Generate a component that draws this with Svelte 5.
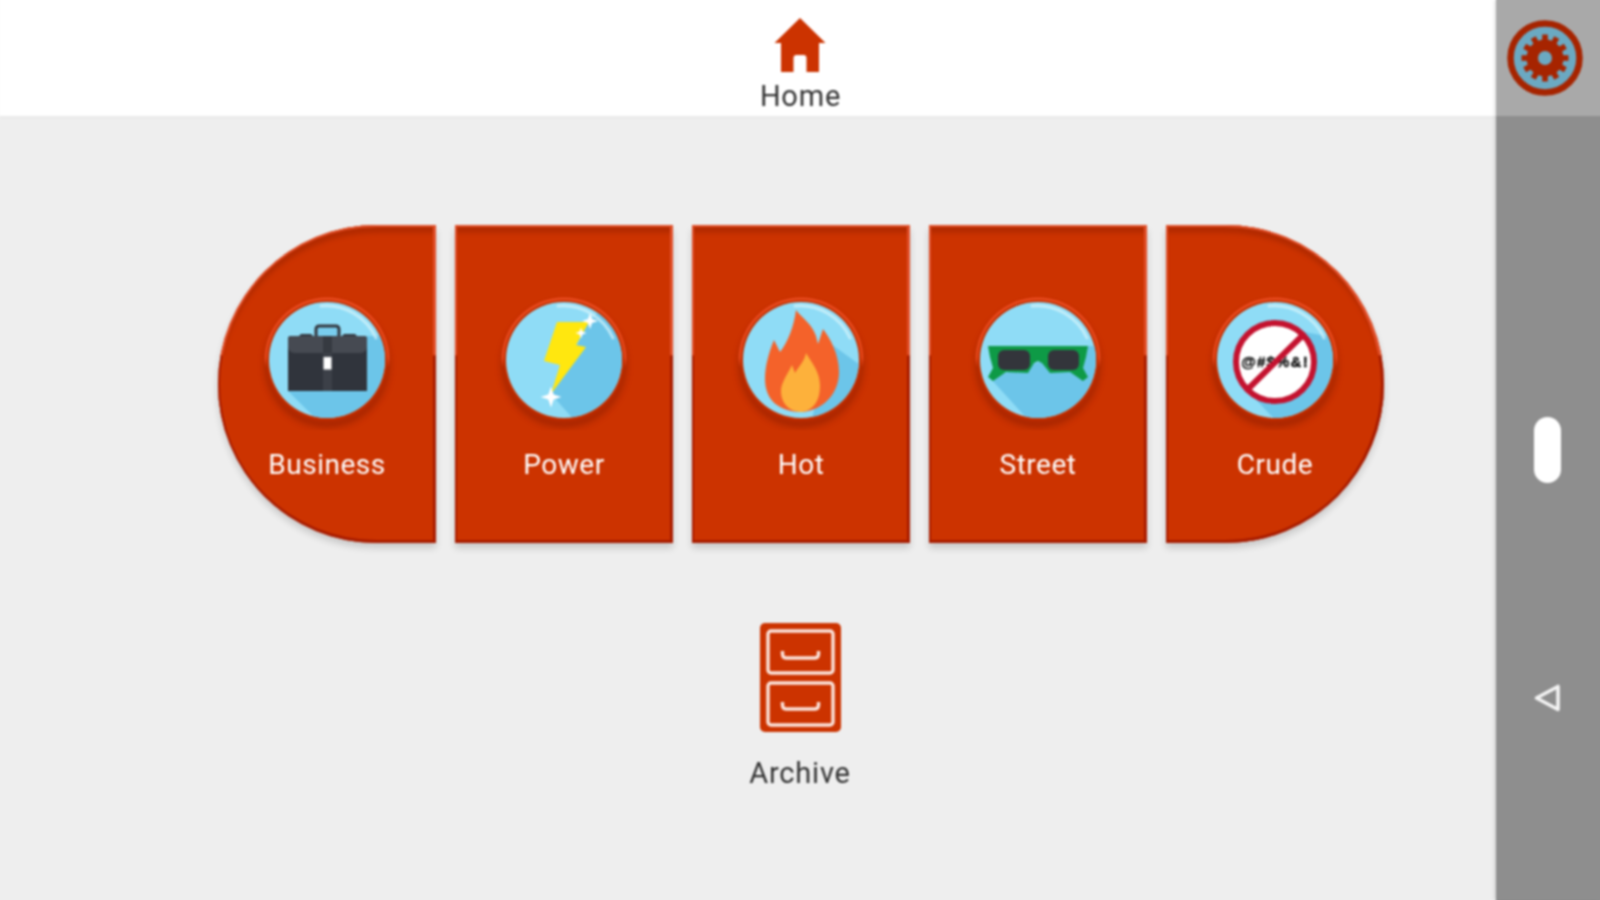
<script>
  const items = [
    { key: 'business', label: 'Business', shade: '-39,31 -8,62 70,62 70,-24 40,-24' },
    { key: 'power', label: 'Power', shade: '25,-38 55,-70 70,-70 70,62 12,62 -13,34' },
    { key: 'hot', label: 'Hot', shade: '30,-16 66,10 66,62 10,62' },
    { key: 'street', label: 'Street', shade: '-48,18 -8,62 70,62 70,-14 50,-14' },
    { key: 'crude', label: 'Crude', shade: '-28,30 2,62 70,62 70,-20 30,-28' }
  ];
  const star = 'M0 -8 L2 -2 L8 0 L2 2 L0 8 L-2 2 L-8 0 L-2 -2 Z';
</script>

<div class="page">
  <header class="topbar">
    <svg class="home-icon" viewBox="0 0 52 56" aria-hidden="true">
      <path d="M26 0 L51.500 25 L45 25 L45 54 L32.500 54 L32.500 40 Q32.500 37 29.500 37 L22.500 37 Q19.500 37 19.500 40 L19.500 54 L7 54 L7 25 L0.500 25 Z" />
    </svg>
    <span class="top-label">Home</span>
  </header>

  <main class="content">
    <section class="cards">
      {#each items as item}
        <button class="card {item.key}">
          <svg class="badge" viewBox="-70 -70 140 140" aria-hidden="true">
            <defs>
              <clipPath id="clip-{item.key}"><circle r="58" /></clipPath>
              <linearGradient id="ring-{item.key}" x1="0" y1="0" x2="0" y2="1">
                <stop offset="0" stop-color="#ea4c20" />
                <stop offset="0.48" stop-color="#e4471a" />
                <stop offset="0.56" stop-color="#b42a00" />
                <stop offset="1" stop-color="#b42800" />
              </linearGradient>
              <filter id="soft-{item.key}" x="-20%" y="-20%" width="140%" height="140%">
                <feGaussianBlur stdDeviation="3" />
              </filter>
            </defs>
            <circle cy="5" r="63" fill="#8f1f00" opacity="0.55" filter="url(#soft-{item.key})" />
            <circle r="62.500" fill="url(#ring-{item.key})" />
            <circle r="60" fill="#c43000" />
            <circle r="58" fill="#8fdcf6" />
            <g clip-path="url(#clip-{item.key})">
              <polygon points={item.shade} fill="#6cc5e9" />
            </g>
            <path d="M-6 -54 A55 55 0 0 1 49 -22" fill="none" stroke="#d6f3fb" stroke-opacity="0.7" stroke-width="3" stroke-linecap="round" />

            {#if item.key === 'business'}
              <rect x="-11" y="-34" width="23" height="12" rx="3" fill="#79cdee" stroke="#33373f" stroke-width="3" />
              <path d="M-39 -21 Q-39 -24 -36 -24 L-28 -24 L-26 -26 L-16 -26 L-14 -24 L15 -24 L17 -26 L28 -26 L30 -24 L37 -24 Q40 -24 40 -21 L40 31 L-39 31 Z" fill="#30343c" />
              <path d="M-39 -21 Q-39 -24 -36 -24 L37 -24 Q40 -24 40 -21 L40 -14 Q40 -7 33 -7 L-32 -7 Q-39 -7 -39 -14 Z" fill="#464a52" />
              <rect x="-4" y="-24" width="9" height="17" fill="#363a41" />
              <rect x="-4" y="-7" width="9" height="38" fill="#3c4048" />
              <rect x="-3.500" y="-3" width="8" height="12.500" fill="#ffffff" />
            {:else if item.key === 'power'}
              <polygon points="-7,-38 25,-38 12,-15 22,-13 -13,34 -4,5 -20,1" fill="#ffe70f" />
              <path d={star} transform="translate(26 -39)" fill="#fff" />
              <circle cx="26" cy="-39" r="2.500" fill="#fff" />
              <path d={star} transform="translate(17 -27) scale(.7)" fill="#fff" />
              <circle cx="17" cy="-27" r="2" fill="#fff" />
              <path d={star} transform="translate(-13 37) scale(1.300)" fill="#fff" />
              <circle cx="-13" cy="37" r="3.500" fill="#fff" />
            {:else if item.key === 'hot'}
              <path d="M-5 -50 C1 -42 11 -36 15 -24 L17 -16 L22 -31 C29 -22 38 -6 38 12 C38 32 24 50 1 52 C-22 52 -36 40 -36 19 C-36 6 -32 -8 -27 -20 L-21 -8 C-13 -18 -7 -34 -5 -50 Z" fill="#f4622a" />
              <path d="M5 -7 C11 3 19 12 19 26 C19 40 13 50 1 52 C-12 52 -20 43 -20 31 C-20 23 -14 15 -9 5 L-6 13 C-2 6 3 2 5 -7 Z" fill="#fdb13b" />
            {:else if item.key === 'street'}
              <path d="M-50 -14 L-10 -14 L10 -14 L50 -14 L48 -3 L45 8 L50 17 L45 21 L32 12 L12 13 L4 3 L0 1 L-4 3 L-10 13 L-32 12 L-45 21 L-50 17 L-45 8 L-48 -3 Z" fill="#0e9a46" />
              <rect x="-40" y="-10" width="32" height="20" rx="6" fill="#33353b" />
              <rect x="10" y="-10" width="31" height="20" rx="6" fill="#33353b" />
            {:else}
              <circle cy="2" r="39" fill="#fff" stroke="#c4122f" stroke-width="6" />
              <text class="swear" y="7" text-anchor="middle">@#$%&amp;!</text>
              <line x1="28" y1="-25" x2="-27" y2="29" stroke="#c4122f" stroke-width="6" />
            {/if}
          </svg>
          <span class="card-label">{item.label}</span>
        </button>
      {/each}
    </section>

    <section class="archive">
      <svg class="archive-icon" viewBox="0 0 81 109" aria-hidden="true">
        <rect width="81" height="109" rx="5" fill="#cc3300" />
        <rect x="8" y="8" width="65" height="42" rx="3" fill="none" stroke="#fbe4dc" stroke-width="3.400" />
        <rect x="8" y="60" width="65" height="42" rx="3" fill="none" stroke="#fbe4dc" stroke-width="3.400" />
        <path d="M22.500 28 V31 Q22.500 35 26 35 H55 Q58.500 35 58.500 31 V28" fill="none" stroke="#fbe4dc" stroke-width="3.400" />
        <path d="M22.500 79 V82 Q22.500 86 26 86 H55 Q58.500 86 58.500 82 V79" fill="none" stroke="#fbe4dc" stroke-width="3.400" />
      </svg>
      <span class="archive-label">Archive</span>
    </section>
  </main>

  <aside class="sidebar">
    <div class="side-top">
      <svg class="gear" viewBox="-38 -38 76 76" aria-hidden="true">
        <circle r="34.500" fill="#6ba9c2" stroke="#a62400" stroke-width="6.500" />
        <g fill="#a62400">
          <circle r="18.500" />
          {#each Array(12) as _, i}
            <rect x="-2.800" y="-23.500" width="5.600" height="8" transform="rotate({i * 30})" />
          {/each}
        </g>
        <circle r="7" fill="#6ba9c2" />
      </svg>
    </div>
    <div class="side-body">
      <span class="pill"></span>
      <svg class="back" viewBox="0 0 26 28" aria-hidden="true">
        <path d="M2.500 14 L24 2.500 V25.500 Z" fill="none" stroke="#f4f4f4" stroke-width="3.600" stroke-linejoin="round" />
      </svg>
    </div>
  </aside>
</div>

<style>
  :global(body) {
    margin: 0;
    background: #eeeeee;
    overflow: hidden;
  }
  .page {
    position: relative;
    width: 1600px;
    height: 900px;
    background: #eeeeee;
    font-family: Roboto, "Liberation Sans", sans-serif;
    filter: blur(0.9px);
    box-shadow: 0 0 0 8px #eeeeee;
  }
  .topbar {
    height: 116px;
    box-sizing: border-box;
    padding-top: 18px;
    background: #ffffff;
    display: flex;
    flex-direction: column;
    align-items: center;
    box-shadow:
      0 1px 3px rgba(0, 0, 0, 0.04),
      -8px -8px 0 #ffffff,
      0 -8px 0 #ffffff,
      -8px 0 0 #ffffff;
  }
  .home-icon {
    width: 52px;
    height: 56px;
    fill: #cc3300;
    flex: none;
  }
  .top-label {
    font-size: 29px;
    line-height: 34px;
    letter-spacing: 0.8px;
    color: #333333;
    margin-top: 5px;
    padding-left: 1px;
  }
  .content {
    display: flex;
    flex-direction: column;
    align-items: center;
    padding: 109px 0 0 2px;
  }
  .cards {
    display: flex;
    gap: 19.2px;
  }
  .card {
    position: relative;
    flex: 0 0 217.8px;
    height: 318px;
    box-sizing: border-box;
    padding: 65px 0 0;
    margin: 0;
    border: 0;
    background: #cc3300;
    display: flex;
    flex-direction: column;
    align-items: center;
    font: inherit;
    color: #ffffff;
    box-shadow: 0 5px 7px rgba(0, 0, 0, 0.16);
  }
  .business {
    border-radius: 159px 0 0 159px;
  }
  .crude {
    border-radius: 0 159px 159px 0;
  }
  .card::before,
  .card::after {
    content: "";
    position: absolute;
    inset: 0;
    border-radius: inherit;
    pointer-events: none;
  }
  .card::before {
    clip-path: inset(0 0 59% 0);
    box-shadow:
      inset 0 2px 0 #e2502a,
      inset 2px 0 0 #e2502a,
      inset -3px 0 0 #e2502a,
      inset 0 8px 4px #b32b00;
  }
  .card::after {
    clip-path: inset(41% 0 0 0);
    box-shadow:
      inset 0 -3px 0 #a81c00,
      inset 2px 0 0 #a81c00,
      inset -3px 0 0 #a81c00;
  }
  .badge {
    width: 140px;
    height: 140px;
    flex: none;
    position: relative;
    z-index: 1;
  }
  .swear {
    font-family: "Liberation Sans", sans-serif;
    font-weight: 700;
    font-size: 15px;
    letter-spacing: 1.2px;
    fill: #111111;
    stroke: #111111;
    stroke-width: 0.4px;
  }
  .card-label {
    margin-top: 18px;
    font-size: 28px;
    line-height: 33px;
    letter-spacing: 0.5px;
    color: #ffffff;
    position: relative;
    z-index: 1;
  }
  .archive {
    margin-top: 80px;
    margin-right: 2px;
    display: flex;
    flex-direction: column;
    align-items: center;
  }
  .archive-icon {
    width: 81px;
    height: 109px;
    flex: none;
  }
  .archive-label {
    margin-top: 24px;
    font-size: 29px;
    line-height: 34px;
    letter-spacing: 0.8px;
    color: #333333;
  }
  .sidebar {
    position: absolute;
    top: 0;
    right: 0;
    bottom: 0;
    width: 104px;
    display: flex;
    flex-direction: column;
    background: #8e8e8e;
    box-shadow:
      -2px 0 3px rgba(0, 0, 0, 0.1),
      8px 0 0 #8e8e8e,
      0 8px 0 #8e8e8e,
      8px 8px 0 #8e8e8e;
  }
  .side-top {
    height: 116px;
    flex: none;
    background: #a9a9a9;
    display: flex;
    justify-content: center;
    padding: 20px 7px 0 0;
    box-sizing: border-box;
    box-shadow:
      0 -8px 0 #a9a9a9,
      8px -8px 0 #a9a9a9,
      8px 0 0 #a9a9a9;
  }
  .gear {
    width: 76px;
    height: 76px;
  }
  .side-body {
    display: flex;
    flex-direction: column;
    align-items: center;
    padding: 301px 2px 0 0;
  }
  .pill {
    width: 27px;
    height: 66px;
    border-radius: 13.5px;
    background: #ffffff;
  }
  .back {
    width: 26px;
    height: 28px;
    margin-top: 201px;
  }
</style>
